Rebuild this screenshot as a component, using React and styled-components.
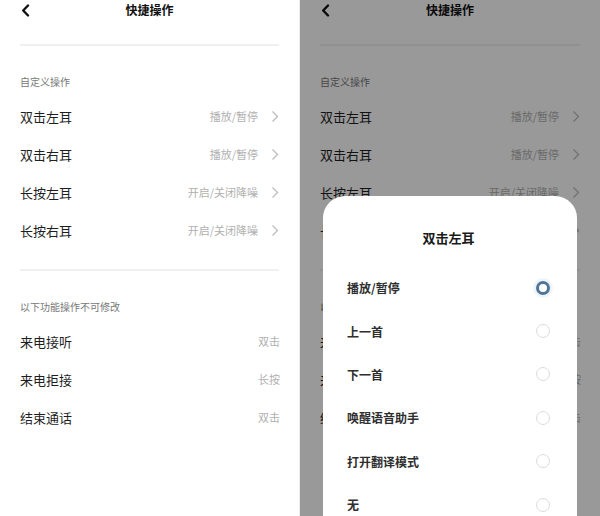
import styled, { createGlobalStyle } from "styled-components";

const GlobalStyle = createGlobalStyle`
  body {
    margin: 0;
    background: #ffffff;
    font-family: "Noto Sans CJK SC", "Noto Sans", sans-serif;
  }
`;

const customRows = [
  { label: "双击左耳", value: "播放/暂停" },
  { label: "双击右耳", value: "播放/暂停" },
  { label: "长按左耳", value: "开启/关闭降噪" },
  { label: "长按右耳", value: "开启/关闭降噪" },
];

const fixedRows = [
  { label: "来电接听", value: "双击" },
  { label: "来电拒接", value: "长按" },
  { label: "结束通话", value: "双击" },
];

const options = ["播放/暂停", "上一首", "下一首", "唤醒语音助手", "打开翻译模式", "无"];

function BackIcon() {
  return (
    <svg width="9" height="13" viewBox="0 0 9 13">
      <path d="M7 1.5 L2.2 6.5 L7 11.5" fill="none" stroke="#111" strokeWidth="2.4" strokeLinecap="round" strokeLinejoin="round" />
    </svg>
  );
}

function Chevron() {
  return (
    <svg width="8" height="13" viewBox="0 0 8 13">
      <path d="M1.5 1.5 L6.5 6.5 L1.5 11.5" fill="none" stroke="#bdbdbd" strokeWidth="1.3" />
    </svg>
  );
}

function SettingsScreen() {
  return (
    <>
      <Header>
        <BackButton><BackIcon /></BackButton>
        <Title>快捷操作</Title>
      </Header>
      <Divider />
      <SectionLabel>自定义操作</SectionLabel>
      <List>
        {customRows.map((row) => (
          <Row key={row.label}>
            <RowLabel>{row.label}</RowLabel>
            <RowValue>{row.value}</RowValue>
            <Chevron />
          </Row>
        ))}
      </List>
      <Divider $top={20} />
      <SectionLabel>以下功能操作不可修改</SectionLabel>
      <List>
        {fixedRows.map((row) => (
          <Row key={row.label}>
            <RowLabel>{row.label}</RowLabel>
            <RowValue $plain>{row.value}</RowValue>
          </Row>
        ))}
      </List>
    </>
  );
}

export default function App() {
  return (
    <>
      <GlobalStyle />
      <Page>
        <Phone $edge>
          <SettingsScreen />
        </Phone>
        <Phone>
          <SettingsScreen />
          <Overlay />
          <Sheet>
            <SheetTitle>双击左耳</SheetTitle>
            <OptionList>
              {options.map((opt, i) => (
                <Option key={opt}>
                  <span>{opt}</span>
                  <Radio $checked={i === 0} />
                </Option>
              ))}
            </OptionList>
          </Sheet>
        </Phone>
      </Page>
    </>
  );
}

const Page = styled.div`
  display: flex;
  width: 600px;
  height: 516px;
  overflow: hidden;
`;

const Phone = styled.div`
  position: relative;
  width: 300px;
  height: 516px;
  padding: 0 20px;
  box-sizing: border-box;
  background: #ffffff;
  overflow: hidden;
  border-right: ${({ $edge }) => ($edge ? "1px solid #ececec" : "none")};
`;

const Header = styled.div`
  position: relative;
  height: 20px;
  display: flex;
  align-items: center;
  justify-content: center;
`;

const BackButton = styled.div`
  position: absolute;
  left: 1px;
  top: 4px;
  display: flex;
`;

const Title = styled.div`
  font-size: 12px;
  font-weight: 700;
  color: #111;
  line-height: 20px;
`;

const Divider = styled.div`
  height: 2px;
  background: #f0f0f0;
  margin-top: ${({ $top }) => ($top ?? 24)}px;
`;

const SectionLabel = styled.div`
  margin-top: 29px;
  font-size: 10px;
  line-height: 14px;
  color: #777;
`;

const List = styled.div`
  margin-top: 8px;
  display: flex;
  flex-direction: column;
`;

const Row = styled.div`
  height: 38px;
  display: flex;
  align-items: center;
  gap: 13px;
`;

const RowLabel = styled.div`
  flex: 1;
  font-size: 13px;
  color: #1e1e1e;
`;

const RowValue = styled.div`
  font-size: 11px;
  color: #b0b0b0;
  margin-right: ${({ $plain }) => ($plain ? "-1px" : "0")};
`;

const Overlay = styled.div`
  position: absolute;
  inset: 0;
  background: rgba(0, 0, 0, 0.4);
`;

const Sheet = styled.div`
  position: absolute;
  left: 23px;
  right: 23px;
  top: 196px;
  height: 360px;
  background: #ffffff;
  border-radius: 22px 22px 0 0;
  padding: 32px 27px 0 24px;
  box-sizing: border-box;
`;

const SheetTitle = styled.div`
  text-align: center;
  font-size: 13px;
  font-weight: 700;
  line-height: 20px;
  color: #1a1a1a;
`;

const OptionList = styled.div`
  margin-top: 18px;
  display: flex;
  flex-direction: column;
`;

const Option = styled.div`
  height: 43.4px;
  display: flex;
  align-items: center;
  justify-content: space-between;
  font-size: 12px;
  font-weight: 700;
  color: #2e2e2e;
`;

const Radio = styled.span`
  width: ${({ $checked }) => ($checked ? "8px" : "12px")};
  height: ${({ $checked }) => ($checked ? "8px" : "12px")};
  border-radius: 50%;
  border: ${({ $checked }) => ($checked ? "3px solid #4f7696" : "1px solid #dcdcdc")};
  box-shadow: ${({ $checked }) => ($checked ? "0 0 0 3px rgba(120, 170, 220, 0.12)" : "none")};
`;
